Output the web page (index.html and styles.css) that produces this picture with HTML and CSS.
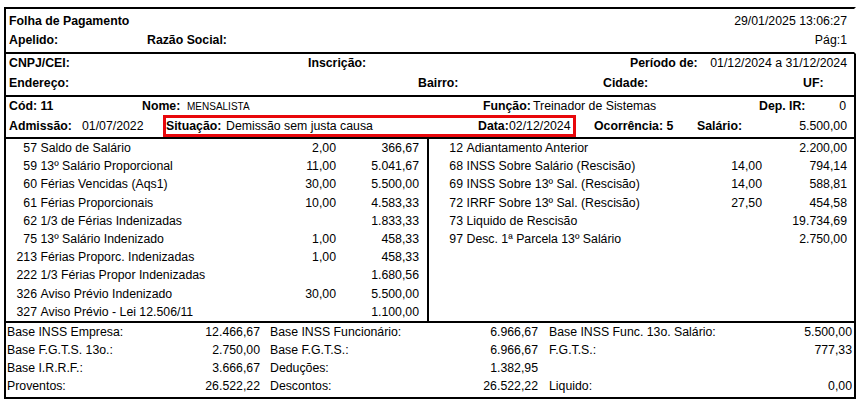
FILE: index.html
```html
<!DOCTYPE html>
<html lang="pt-BR">
<head>
<meta charset="utf-8">
<title>Folha de Pagamento</title>
<link rel="stylesheet" href="styles.css">
</head>
<body>
<div class="sheet">
  <section class="sec sec-top">
    <div class="row r1a">
      <b>Folha de Pagamento</b>
      <span class="right">29/01/2025 13:06:27</span>
    </div>
    <div class="row r1b">
      <b>Apelido:</b>
      <b>Razão Social:</b>
      <span class="right">Pág:1</span>
    </div>
  </section>

  <section class="sec sec-emp">
    <div class="row r2a">
      <b>CNPJ/CEI:</b>
      <b>Inscrição:</b>
      <b>Período de:</b>
      <span class="right">01/12/2024 a 31/12/2024</span>
    </div>
    <div class="row r2b">
      <b>Endereço:</b>
      <b>Bairro:</b>
      <b>Cidade:</b>
      <b>UF:</b>
    </div>
  </section>

  <section class="sec sec-func">
    <div class="row r3a">
      <b>Cód: 11</b>
      <b>Nome:</b>
      <span class="small">MENSALISTA</span>
      <b>Função:</b>
      <span>Treinador de Sistemas</span>
      <b>Dep. IR:</b>
      <span class="right">0</span>
    </div>
    <div class="row r3b">
      <b>Admissão:</b>
      <span>01/07/2022</span>
      <div class="highlight">
        <b>Situação:</b>
        <span>Demissão sem justa causa</span>
        <b>Data:</b>
        <span>02/12/2024</span>
      </div>
      <b class="ocor">Ocorrência: 5</b>
      <b>Salário:</b>
      <span class="right">5.500,00</span>
    </div>
  </section>

  <section class="sec items">
    <div class="col col-left">
      <div class="item"><span class="code">57</span><span class="name">Saldo de Salário</span><span class="qty">2,00</span><span class="val">366,67</span></div>
      <div class="item"><span class="code">59</span><span class="name">13º Salário Proporcional</span><span class="qty">11,00</span><span class="val">5.041,67</span></div>
      <div class="item"><span class="code">60</span><span class="name">Férias Vencidas (Aqs1)</span><span class="qty">30,00</span><span class="val">5.500,00</span></div>
      <div class="item"><span class="code">61</span><span class="name">Férias Proporcionais</span><span class="qty">10,00</span><span class="val">4.583,33</span></div>
      <div class="item"><span class="code">62</span><span class="name">1/3 de Férias Indenizadas</span><span class="qty"></span><span class="val">1.833,33</span></div>
      <div class="item"><span class="code">75</span><span class="name">13º Salário Indenizado</span><span class="qty">1,00</span><span class="val">458,33</span></div>
      <div class="item"><span class="code">213</span><span class="name">Férias Proporc. Indenizadas</span><span class="qty">1,00</span><span class="val">458,33</span></div>
      <div class="item"><span class="code">222</span><span class="name">1/3 Férias Propor Indenizadas</span><span class="qty"></span><span class="val">1.680,56</span></div>
      <div class="item"><span class="code">326</span><span class="name">Aviso Prévio Indenizado</span><span class="qty">30,00</span><span class="val">5.500,00</span></div>
      <div class="item"><span class="code">327</span><span class="name">Aviso Prévio - Lei 12.506/11</span><span class="qty"></span><span class="val">1.100,00</span></div>
    </div>
    <div class="col col-right">
      <div class="item"><span class="code">12</span><span class="name">Adiantamento Anterior</span><span class="qty"></span><span class="val">2.200,00</span></div>
      <div class="item"><span class="code">68</span><span class="name">INSS Sobre Salário (Rescisão)</span><span class="qty">14,00</span><span class="val">794,14</span></div>
      <div class="item"><span class="code">69</span><span class="name">INSS Sobre 13º Sal. (Rescisão)</span><span class="qty">14,00</span><span class="val">588,81</span></div>
      <div class="item"><span class="code">72</span><span class="name">IRRF Sobre 13º Sal. (Rescisão)</span><span class="qty">27,50</span><span class="val">454,58</span></div>
      <div class="item"><span class="code">73</span><span class="name">Liquido de Rescisão</span><span class="qty"></span><span class="val">19.734,69</span></div>
      <div class="item"><span class="code">97</span><span class="name">Desc. 1ª Parcela 13º Salário</span><span class="qty"></span><span class="val">2.750,00</span></div>
    </div>
  </section>

  <section class="sec totals">
    <span>Base INSS Empresa:</span><span class="num">12.466,67</span>
    <span class="lbl">Base INSS Funcionário:</span><span class="num">6.966,67</span>
    <span class="lbl lbl3">Base INSS Func. 13o. Salário:</span><span class="num">5.500,00</span>

    <span>Base F.G.T.S. 13o.:</span><span class="num">2.750,00</span>
    <span class="lbl">Base F.G.T.S.:</span><span class="num">6.966,67</span>
    <span class="lbl lbl3">F.G.T.S.:</span><span class="num">777,33</span>

    <span>Base I.R.R.F.:</span><span class="num">3.666,67</span>
    <span class="lbl">Deduções:</span><span class="num">1.382,95</span>
    <span class="lbl lbl3"></span><span class="num"></span>

    <span>Proventos:</span><span class="num">26.522,22</span>
    <span class="lbl">Descontos:</span><span class="num">26.522,22</span>
    <span class="lbl lbl3">Liquido:</span><span class="num">0,00</span>
  </section>
</div>
</body>
</html>
```

FILE: styles.css
```css
* { box-sizing: border-box; }

body {
  margin: 0;
  background: #fff;
  color: #000;
  font-family: "Liberation Sans", Arial, sans-serif;
  font-size: 12.3px;
}

b { font-weight: bold; }

.sheet {
  margin: 7px 0 0 4px;
  width: 852px;
}

.sec {
  border-left: 2px solid #000;
  border-right: 2px solid #000;
  border-bottom: 2px solid #000;
}

.row {
  display: grid;
  align-items: center;
  white-space: nowrap;
  padding: 0 7px 0 3px;
}

.right { justify-self: end; text-align: right; }

/* Section 1 */
.sec-top {
  border-top: 2px solid #000;
  border-right-color: transparent;
  height: 47px;
  padding-top: 2px;
}
.sec-top .row { height: 19px; }
.r1a { grid-template-columns: 1fr auto; }
.r1b { grid-template-columns: 138px 1fr auto; }

/* Section 2 */
.sec-emp { height: 43px; }
.r2a { height: 17px; grid-template-columns: 299px 322px 78px 1fr; }
.r2b { height: 24px; grid-template-columns: 409px 185px 200px 1fr; }

/* Section 3 */
.sec-func { height: 42px; }
.r3a { height: 18px; grid-template-columns: 133px 45px 296px 50px 226px 1fr auto; padding-right: 8px; }
.r3b { height: 22px; grid-template-columns: 73px 81px 413px 121px 1fr auto; align-items: stretch; }
.r3b > b, .r3b > span { align-self: center; }
.small { font-size: 10px; }

.highlight {
  border: 3px solid #e8070b;
  display: grid;
  grid-template-columns: 60px 252px 31px 1fr;
  align-items: center;
}
.ocor { padding-left: 18px; }

/* Items */
.items {
  display: grid;
  grid-template-columns: 423px 1fr;
  height: 184px;
}
.col-left { border-right: 2px solid #000; }

.item {
  display: grid;
  height: 18.2px;
  align-items: center;
  white-space: nowrap;
}
.col-left .item { grid-template-columns: 31px 1fr 60px 83px; padding-right: 8px; }
.col-right .item { grid-template-columns: 34px 1fr 60px 85px; padding-right: 7px; }
.code { text-align: right; }
.name { padding-left: 3.5px; }
.qty, .val { text-align: right; }

/* Totals */
.totals {
  display: grid;
  grid-template-columns: 150px 103px 160px 118px 1fr auto;
  grid-auto-rows: 18px;
  align-items: center;
  padding: 0 2px 3px 1px;
  height: 76px;
  white-space: nowrap;
}
.totals .num { text-align: right; }
.totals .lbl { padding-left: 10px; }
.totals .lbl3 { padding-left: 11px; }
```
